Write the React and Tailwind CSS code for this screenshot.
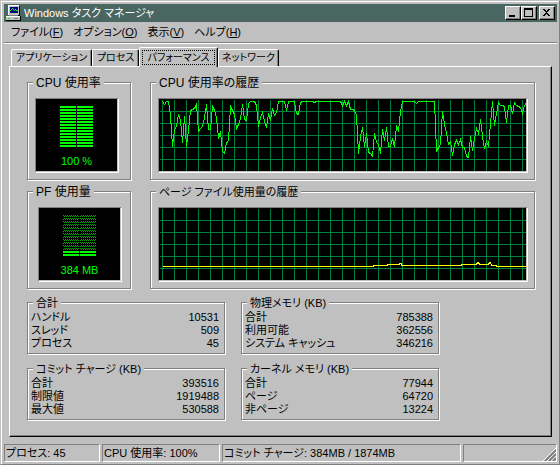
import { useState } from 'react';

const MENUS = [
  { label: 'ファイル', key: 'F' },
  { label: 'オプション', key: 'O' },
  { label: '表示', key: 'V' },
  { label: 'ヘルプ', key: 'H' },
];

const TABS = [
  { name: 'アプリケーション', width: 'w-[81px]' },
  { name: 'プロセス', width: 'w-[47px]' },
  { name: 'パフォーマンス', width: 'w-[79px]' },
  { name: 'ネットワーク', width: 'w-[61px]' },
];

// one sample every 2px, measured down from the top of the graph
const CPU_HISTORY = [
  2, 5, 2, 2, 16, 47, 30, 27, 15, 21, 43, 17, 47, 31, 11, 10, 9, 5, 32, 29, 27, 18, 5, 30, 30, 7, 11, 18,
  39, 32, 52, 54, 43, 42, 7, 11, 15, 29, 25, 19, 5, 20, 21, 4, 2, 2, 2, 6, 27, 18, 13, 22, 28, 14, 21, 9,
  16, 13, 2, 2, 2, 2, 11, 2, 2, 2, 2, 14, 15, 3, 2, 2, 2, 2, 2, 2, 3, 2, 2, 2, 2, 2, 2, 2, 2, 2, 2, 2, 2,
  2, 6, 2, 6, 2, 10, 10, 11, 16, 54, 37, 28, 47, 34, 53, 54, 57, 34, 43, 45, 54, 30, 41, 28, 47, 47, 39,
  47, 26, 32, 12, 2, 2, 2, 2, 2, 2, 2, 4, 2, 2, 2, 2, 2, 2, 2, 2, 2, 52, 48, 45, 12, 25, 34, 45, 42, 56,
  45, 41, 45, 40, 48, 48, 57, 58, 37, 51, 39, 29, 34, 20, 37, 49, 42, 47, 24, 2, 26, 14, 3, 6, 6, 7, 23,
  6, 6, 14, 3, 6, 7, 8, 14, 6, 3,
];

const CPU_POINTS = CPU_HISTORY.map((y, i) => `${3.5 + i * 2},${y + 0.5}`).join(' ');

const PF_POINTS =
  '4,58.5 214,58.5 214,57.5 228,57.5 228,56.5 240,56.5 241,55.5 242,55.5 243,57.5 302,57.5 302,56.5 317,56.5 319,54.5 321,56.5 329,56.5 331,54.5 333,57.5 337,57.5 337,58.5 367,58.5';

const TOTALS = [
  [
    { title: '合計', rows: [['ハンドル', 10531], ['スレッド', 509], ['プロセス', 45]] },
    { title: 'コミット チャージ (KB)', rows: [['合計', 393516], ['制限値', 1919488], ['最大値', 530588]] },
  ],
  [
    { title: '物理メモリ (KB)', rows: [['合計', 785388], ['利用可能', 362556], ['システム キャッシュ', 346216]] },
    { title: 'カーネル メモリ (KB)', rows: [['合計', 77944], ['ページ', 64720], ['非ページ', 13224]] },
  ],
];

function Group({ title, className, titleClass = '', children }) {
  return (
    <section
      className={`mr-px mb-px border border-[#808080] shadow-[1px_1px_0_#fff,inset_1px_1px_0_#fff] ${className}`}
    >
      <h2 className={`relative -mt-2 ml-[5px] w-fit bg-[#c0c0c0] px-[3px] leading-4 whitespace-nowrap ${titleClass}`}>
        {title}
      </h2>
      {children}
    </section>
  );
}

function Sunken({ className = '', children }) {
  return (
    <div className={`border border-t-[#808080] border-l-[#808080] border-r-white border-b-white pr-px pb-px ${className}`}>
      <div className="h-[72px] bg-black">{children}</div>
    </div>
  );
}

function Meter({ lit, label }) {
  const rows = Array.from({ length: 14 }, (_, i) => i >= 14 - lit);
  return (
    <div className="flex flex-col items-center pt-[7px]">
      <svg width="33" height="42" shapeRendering="crispEdges" aria-hidden="true">
        <defs>
          <pattern id="dither" width="2" height="2" patternUnits="userSpaceOnUse">
            <rect width="1" height="1" fill="#00a000" />
            <rect x="1" y="1" width="1" height="1" fill="#00a000" />
          </pattern>
        </defs>
        {rows.map((on, i) => (
          <g key={i} fill={on ? '#00ff00' : 'url(#dither)'}>
            <rect x="0" y={i * 3} width="16" height="2" />
            <rect x="17" y={i * 3} width="16" height="2" />
          </g>
        ))}
      </svg>
      <span className="mt-[5px] leading-4 text-[#00ff00]">{label}</span>
    </div>
  );
}

function Graph({ points, color, label }) {
  const cols = Array.from({ length: 31 }, (_, i) => 3.5 + i * 12);
  return (
    <svg
      viewBox="0 0 367 72"
      preserveAspectRatio="none"
      className="block h-full w-full"
      shapeRendering="crispEdges"
      role="img"
      aria-label={label}
    >
      <g stroke="#008040">
        {cols.map((x) => (
          <line key={x} x1={x} x2={x} y1="1" y2="72" />
        ))}
        {[12.5, 24.5, 36.5, 48.5, 60.5].map((y) => (
          <line key={y} x1="1" x2="367" y1={y} y2={y} />
        ))}
      </g>
      <polyline points={points} fill="none" stroke={color} />
    </svg>
  );
}

function CaptionButton({ label, className = '', children }) {
  return (
    <button
      aria-label={label}
      className={`h-[14px] w-4 border border-t-white border-l-white border-r-black border-b-black bg-[#c0c0c0] shadow-[inset_-1px_-1px_0_#808080] ${className}`}
    >
      <svg width="14" height="12" shapeRendering="crispEdges" className="block">
        {children}
      </svg>
    </button>
  );
}

function StatusCell({ className, children }) {
  return (
    <div
      className={`h-[18px] border border-t-[#808080] border-l-[#808080] border-r-white border-b-white pl-px leading-4 whitespace-nowrap ${className}`}
    >
      {children}
    </div>
  );
}

export default function App() {
  const [tab, setTab] = useState('パフォーマンス');

  return (
    <div className="flex min-h-screen flex-col border border-t-[#c0c0c0] border-l-[#c0c0c0] border-r-[#808080] border-b-[#808080] bg-[#c0c0c0] pt-[3px] pr-[2px] pb-[2px] pl-[3px] font-['Liberation_Sans','Noto_Sans_CJK_JP',sans-serif] text-[11px] text-black shadow-[inset_1px_1px_0_#fff] [font-feature-settings:'palt']">
      {/* Title bar */}
      <header className="flex h-[18px] items-center bg-[#4a6660] pr-[2px] pl-[2px] text-white">
        <svg width="16" height="16" viewBox="0 0 16 16" shapeRendering="crispEdges" className="mr-[2px]" aria-hidden="true">
          <rect x="3" y="1" width="11" height="10" fill="#000" />
          <rect x="2" y="0" width="11" height="10" fill="#c0c0c0" />
          <path d="M2 .5h11M2.5 0v10" stroke="#fff" />
          <rect x="4" y="2" width="8" height="6" fill="#000080" />
          <path d="M4 5.5h1M5 4.5h1M6 3.5h1M7 4.5h1M8 5.5h1M9 4.5h1M10 5.5h2" stroke="#00ff00" />
          <rect x="3" y="10" width="9" height="1" fill="#808080" />
          <rect x="0" y="11" width="14" height="4" fill="#c0c0c0" />
          <rect x="0" y="11" width="14" height="1" fill="#fff" />
          <rect x="2" y="13" width="2" height="1" fill="#00ff00" />
          <rect x="8" y="13" width="4" height="1" fill="#808080" />
          <path d="M0 15.5h15M14.5 11v5" stroke="#000" />
        </svg>
        <h1 className="flex-1 truncate leading-[18px]">Windows タスク マネージャ</h1>
        <CaptionButton label="最小化">
          <path d="M3 8h6v2H3z" />
        </CaptionButton>
        <CaptionButton label="最大化">
          <path d="M2 1h9v9H2zM3 3v6h7V3z" fillRule="evenodd" />
        </CaptionButton>
        <CaptionButton label="閉じる" className="ml-[2px]">
          <path d="M3 2h2v1h1v1h1V3h1V2h2v1H9v1H8v1H7v1h1v1h1v1h1v1H8V8H7V7H6v1H5v1H3V8h1V7h1V6h1V5H5V4H4V3H3z" />
        </CaptionButton>
      </header>

      {/* Menu */}
      <nav className="flex h-5 items-center gap-[10px] pl-[7px]">
        {MENUS.map((m) => (
          <button key={m.key} className="leading-4 whitespace-nowrap">
            {m.label}(<u>{m.key}</u>)
          </button>
        ))}
      </nav>
      <div className="h-[2px] border-t border-[#808080] bg-white" />

      {/* Tabs */}
      <div role="tablist" className="mt-[3px] flex h-[19px] items-end pl-[7px]">
        {TABS.map(({ name, width }) => {
          const active = name === tab;
          return (
            <button
              key={name}
              role="tab"
              aria-selected={active}
              onClick={() => setTab(name)}
              className={`rounded-t-[2px] border border-b-0 border-t-white border-l-white border-r-black bg-[#c0c0c0] text-[10px] whitespace-nowrap shadow-[inset_-1px_0_0_#808080] ${width} ${
                active ? 'relative -mb-px h-5 p-[2px]' : 'h-[17px] leading-4'
              }`}
            >
              {active ? (
                <span className="block h-[15px] border border-dotted border-black leading-[13px]">{name}</span>
              ) : (
                name
              )}
            </button>
          );
        })}
      </div>

      {/* Performance page */}
      <main className="mr-[5px] ml-[5px] flex flex-1 flex-col border border-t-white border-l-white border-r-black border-b-black pt-[15px] pr-[15px] pb-[14px] pl-[17px] shadow-[inset_-1px_-1px_0_#808080]">
        <div className="flex gap-[18px]">
          <Group title="CPU 使用率" titleClass="text-[12px]" className="h-[98px] w-[104px] shrink-0">
            <Sunken className="mt-[7px] ml-[7px] w-[84px]">
              <Meter lit={14} label="100 %" />
            </Sunken>
          </Group>
          <Group title="CPU 使用率の履歴" titleClass="text-[12px]" className="h-[98px] flex-1">
            <Sunken className="mt-[7px] mr-[6px] ml-[7px]">
              <Graph points={CPU_POINTS} color="#00ff00" label="CPU 使用率の履歴" />
            </Sunken>
          </Group>
        </div>

        <div className="mt-[10px] flex gap-[18px]">
          <Group title="PF 使用量" titleClass="text-[12px]" className="h-[98px] w-[104px] shrink-0">
            <Sunken className="mt-[7px] ml-[10px] w-[84px]">
              <Meter lit={2} label="384 MB" />
            </Sunken>
          </Group>
          <Group title="ページ ファイル使用量の履歴" className="h-[98px] flex-1">
            <Sunken className="mt-[7px] mr-[6px] ml-[7px]">
              <Graph points={PF_POINTS} color="#ffff00" label="ページ ファイル使用量の履歴" />
            </Sunken>
          </Group>
        </div>

        <div className="mt-3 flex gap-[15px]">
          {TOTALS.map((column, i) => (
            <div key={i} className="flex w-[199px] flex-col gap-[13px]">
              {column.map(({ title, rows }) => (
                <Group key={title} title={title} className="h-[52px]">
                  <table className="w-full leading-[13px]">
                    <tbody>
                      {rows.map(([name, value]) => (
                        <tr key={name}>
                          <th className="p-0 pl-[3px] text-left font-normal whitespace-nowrap">{name}</th>
                          <td className="p-0 pr-[5px] text-right">{value}</td>
                        </tr>
                      ))}
                    </tbody>
                  </table>
                </Group>
              ))}
            </div>
          ))}
        </div>
      </main>

      {/* Status bar */}
      <footer className="mt-[7px] flex gap-[2px]">
        <StatusCell className="w-24">プロセス: 45</StatusCell>
        <StatusCell className="w-[118px]">CPU 使用率: 100%</StatusCell>
        <StatusCell className="flex-1">コミット チャージ: 384MB / 1874MB</StatusCell>
        <StatusCell className="flex w-[94px] items-end justify-end">
          <svg width="13" height="13" aria-hidden="true">
            <path d="M0 13L13 0M4 13L13 4M8 13L13 8" stroke="#fff" />
            <path d="M2 13L13 2M6 13L13 6M10 13L13 10" stroke="#808080" strokeWidth="2" />
          </svg>
        </StatusCell>
      </footer>
    </div>
  );
}
